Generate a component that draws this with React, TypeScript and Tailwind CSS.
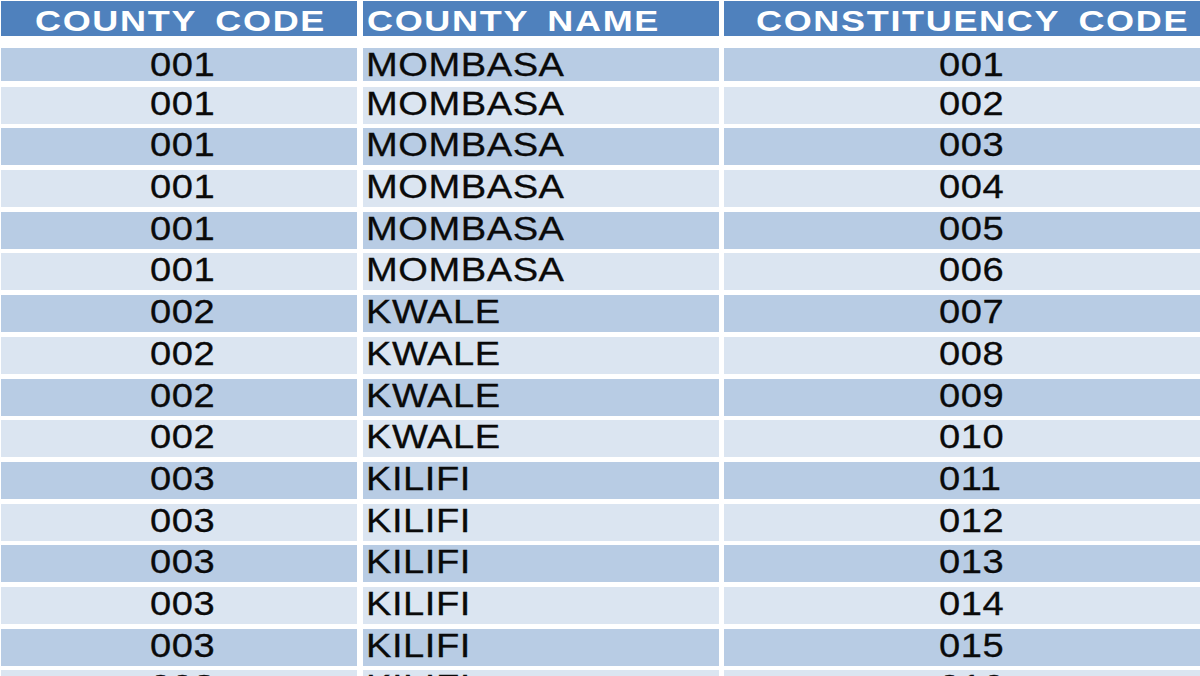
import React from "react";

const rows: [string, string, string][] = [
  ["001", "MOMBASA", "001"],
  ["001", "MOMBASA", "002"],
  ["001", "MOMBASA", "003"],
  ["001", "MOMBASA", "004"],
  ["001", "MOMBASA", "005"],
  ["001", "MOMBASA", "006"],
  ["002", "KWALE", "007"],
  ["002", "KWALE", "008"],
  ["002", "KWALE", "009"],
  ["002", "KWALE", "010"],
  ["003", "KILIFI", "011"],
  ["003", "KILIFI", "012"],
  ["003", "KILIFI", "013"],
  ["003", "KILIFI", "014"],
  ["003", "KILIFI", "015"],
  ["003", "KILIFI", "016"],
];

function H({ children }: { children: React.ReactNode }) {
  return <span className="inline-block origin-left scale-x-[1.2]">{children}</span>;
}

function D({ children }: { children: React.ReactNode }) {
  return <span className="inline-block origin-left scale-x-[1.12]">{children}</span>;
}

export default function App() {
  return (
    <div
      className="w-[1200px] h-[676px] overflow-hidden bg-white"
      style={{ fontFamily: '"Liberation Sans", Arial, sans-serif' }}
    >
      <div className="flex flex-col w-[1220px] pl-[1px]">
        <div className="flex mt-[1px] h-[35px] text-white font-bold text-[30px] leading-[31px] tracking-[1.4px] [word-spacing:6px] whitespace-nowrap">
          <div className="w-[356px] h-full bg-[#4f81bd] pt-[4px] pl-[34px]"><H>COUNTY CODE</H></div>
          <div className="w-[356px] ml-[6px] h-full bg-[#4f81bd] pt-[4px] pl-[4px]"><H>COUNTY NAME</H></div>
          <div className="w-[496px] ml-[5px] h-full bg-[#4f81bd] pt-[4px] pl-[32px]"><H>CONSTITUENCY CODE</H></div>
        </div>
        {rows.map((r, i) => {
          const bg = i % 2 === 0 ? "bg-[#b8cce4]" : "bg-[#dbe5f1]";
          const mt = i === 0 ? "mt-[12px] h-[33px]" : i === 1 ? "mt-[5.7px] h-[37px]" : "mt-[4.7px] h-[37px]";
          return (
            <div
              key={i}
              className={`flex ${mt} shrink-0 text-[34px] leading-[33px] tracking-[0.5px] text-[#0a0a0a] [-webkit-text-stroke:0.3px_#0a0a0a] whitespace-nowrap`}
            >
              <div className={`w-[356px] h-full ${bg} pl-[149px]`}><D>{r[0]}</D></div>
              <div className={`w-[356px] ml-[6px] h-full ${bg} pl-[2.5px]`}><D>{r[1]}</D></div>
              <div className={`w-[496px] ml-[5px] h-full ${bg} pl-[215px]`}><D>{r[2]}</D></div>
            </div>
          );
        })}
      </div>
    </div>
  );
}
